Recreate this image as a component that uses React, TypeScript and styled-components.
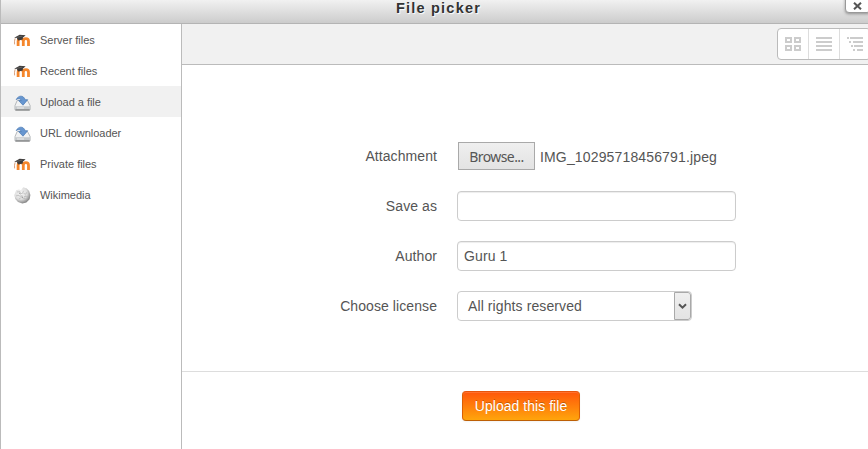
import React from "react";
import styled, { createGlobalStyle } from "styled-components";

const GlobalStyle = createGlobalStyle`
  * { box-sizing: border-box; }
  body { margin: 0; background: #fff; overflow: hidden; }
  body, button, input { font-family: "Liberation Sans", Arial, sans-serif; color: #555; }
`;

const Dialog = styled.div`
  position: relative;
  display: flex;
  flex-direction: column;
  width: 868px;
  height: 449px;
  overflow: hidden;
  border-left: 1px solid #bbb;
  background: #fff;
`;

const Header = styled.header`
  flex: none;
  height: 24px;
  padding-left: 8px;
  border-bottom: 1px solid #b4b4b4;
  background: linear-gradient(#f1f1f1, #cccccc);
  text-align: center;
`;

const Title = styled.h1`
  margin: 0;
  font-size: 14.5px;
  line-height: 16px;
  letter-spacing: 1.22px;
  color: #333;
  text-shadow: 1px 1px 1px #fff;
`;

const CloseButton = styled.button`
  position: absolute;
  top: -6px;
  right: -3px;
  width: 26px;
  height: 19px;
  padding: 4px 1px 0 0;
  display: flex;
  justify-content: center;
  align-items: center;
  border: 1px solid #999;
  border-radius: 4px;
  background: #fff;
  box-shadow: 0 1px 3px rgba(0, 0, 0, 0.35);
`;

const Body = styled.div`
  flex: 1;
  display: flex;
  min-height: 0;
`;

const Sidebar = styled.nav`
  flex: none;
  width: 181px;
  border-right: 1px solid #bbb;
`;

const Repository = styled.div<{ $active?: boolean }>`
  display: flex;
  align-items: center;
  gap: 9px;
  height: 31px;
  padding: 2px 0 0 13px;
  font-size: 11px;
  background: ${(p) => (p.$active ? "#f1f1f1" : "transparent")};
`;

const RepositoryName = styled.span`
  padding-bottom: 2px;
  letter-spacing: -0.02px;
`;

const Content = styled.main`
  flex: 1;
  min-width: 0;
  display: flex;
  flex-direction: column;
`;

const Toolbar = styled.div`
  flex: none;
  display: flex;
  height: 41px;
  padding: 4px 0 0 595px;
  border-bottom: 1px solid #bbb;
  background: #f1f1f1;
  overflow: hidden;
`;

const ViewGroup = styled.div`
  flex: none;
  display: flex;
  height: 32px;
  border: 1px solid #bbb;
  border-radius: 4px;
  background: #fff;
`;

const ViewButton = styled.button`
  display: flex;
  align-items: center;
  justify-content: center;
  width: 31px;
  padding: 0;
  border: 0;
  border-left: 1px solid #ddd;
  background: none;
  &:first-child { width: 30px; border-left: 0; }
`;

const Form = styled.form`
  flex: none;
  display: grid;
  grid-template-columns: 255px 1fr;
  grid-auto-rows: 30px;
  row-gap: 20px;
  column-gap: 20px;
  align-items: center;
  height: 307px;
  padding-top: 76px;
  border-bottom: 1px solid #ddd;
  font-size: 14px;
`;

const Label = styled.label`
  text-align: right;
  line-height: 20px;
  letter-spacing: 0.08px;
`;

const FileField = styled.div`
  display: flex;
  align-items: center;
  padding-left: 1px;
`;

const BrowseButton = styled.button`
  width: 77px;
  height: 28px;
  padding: 0;
  border: 1px solid #a9a9a9;
  background: linear-gradient(#efefef, #e3e3e3);
  font-family: "Noto Sans", "Open Sans", sans-serif;
  font-size: 14px;
  letter-spacing: -0.6px;
`;

const FileName = styled.span`
  margin: 2px 0 0 5px;
  letter-spacing: 0.15px;
`;

const TextInput = styled.input`
  width: 279px;
  height: 30px;
  padding: 0 6px;
  border: 1px solid #ccc;
  border-radius: 4px;
  box-shadow: inset 0 1px 1px rgba(0, 0, 0, 0.075);
  font-size: 14px;
  letter-spacing: 0.1px;
  outline: none;
`;

const Select = styled.div`
  display: flex;
  width: 235px;
  height: 30px;
  border: 1px solid #ccc;
  border-radius: 4px;
  line-height: 28px;
  overflow: hidden;
`;

const SelectValue = styled.span`
  flex: 1;
  padding-left: 10px;
  letter-spacing: 0.1px;
`;

const SelectArrow = styled.span`
  display: flex;
  align-items: center;
  justify-content: center;
  width: 17px;
  border: 1px solid #a9a9a9;
  border-radius: 0 3px 3px 0;
  background: linear-gradient(#efefef, #e3e3e3);
`;

const Footer = styled.footer`
  padding: 19px 0 0 280px;
`;

const UploadButton = styled.button`
  display: block;
  width: 118px;
  height: 30px;
  padding: 0;
  border: 1px solid;
  border-color: #e6550c #d95f04 #bd6005;
  border-radius: 4px;
  background: linear-gradient(#ff570a, #ffa50c);
  box-shadow: inset 0 1px 0 rgba(255, 255, 255, 0.15), 0 1px 2px rgba(0, 0, 0, 0.05);
  color: #fff;
  font-size: 14px;
  letter-spacing: 0.04px;
  text-shadow: 0 -1px 0 rgba(0, 0, 0, 0.25);
`;

const MoodleIcon = () => (
  <svg width="17" height="16" viewBox="0 0 17 16">
    <path d="M4.1 13V8.3a2.6 2.6 0 0 1 5.2 0V13M9.3 8.3a2.6 2.6 0 0 1 5.2 0V13" fill="none" stroke="#f5862b" strokeWidth="2.8" />
    <path d="M1.1 5.4Q.2 8 .6 11.4" fill="none" stroke="#d9a07c" />
    <path d="M.2 4.7 5.6 1.8l6 .5-2.8 2.4v1.9L4.2 7.6 2.8 5z" fill="#3e3c3b" />
    <path d="M1.6 4.6 8.4 3.1" stroke="#777" strokeWidth=".6" />
  </svg>
);

const UploadIcon = () => (
  <svg width="17" height="16" viewBox="0 0 17 16">
    <path d="M3.2 5.5h10.3l2.6 5v3.8q0 1-1 1H2q-1 0-1-1v-3.8z" fill="#f1f2f3" stroke="#a5a8ac" strokeWidth=".8" />
    <path d="M1.2 11.3h14.7v3.1q0 .8-.8.8H2q-.8 0-.8-.8z" fill="#c5c9cc" />
    <path d="M1.4 14.9h14.3" stroke="#777" />
    <path d="M3 13h7" stroke="#eee" />
    <path d="M2.2 4.6C4.2.3 9.4-.3 11.2 4.7h2.5L9 10.2 4.6 5.6h2.6C6.3 3.5 4.5 3.1 2.2 4.6z" fill="#6796d0" stroke="#4878b3" strokeWidth=".7" />
  </svg>
);

const GlobeIcon = () => (
  <svg width="17" height="17" viewBox="0 0 17 17">
    <defs>
      <radialGradient id="globe" cx=".4" cy=".35" r=".65">
        <stop offset="0" stopColor="#f6f6f6" />
        <stop offset=".6" stopColor="#dedede" />
        <stop offset="1" stopColor="#858585" />
      </radialGradient>
    </defs>
    <path d="M2.2 3.2 5 2.5l2 .8L9.2.3l3.5 1.1 2.4 2.6 1.3 3.9-.8 4.3-3.2 3.4-4 1-4.4-1.6L1.3 12 .3 8z" fill="url(#globe)" />
    <path d="m3 5 3-.3.5 2 2-.4 1-2.5M2 9l2-.8 2 1 2.2-.5.5 2.5 2.8.5M9.6 6.5l2.2.7 1-2M5 12l1.8-1.2M12 9l2 1" fill="none" stroke="#b5b5b5" strokeWidth=".7" />
    <path d="m5.3 6.2 1 .8M7.5 9.8l1 1M10.5 9.8l1-.6" stroke="#888" />
  </svg>
);

const GridIcon = () => (
  <svg width="16" height="14" shapeRendering="crispEdges" fill="none" stroke="#ccc" strokeWidth="2">
    <path d="M1 1h5v4H1zM10 1h5v4h-5zM1 9h5v4H1zM10 9h5v4h-5z" />
  </svg>
);

const ListIcon = () => (
  <svg width="16" height="14" shapeRendering="crispEdges" fill="#ccc">
    <path d="M0 0h16v2H0zM0 4h16v2H0zM0 8h16v2H0zM0 12h16v2H0z" />
  </svg>
);

const TreeIcon = () => (
  <svg width="16" height="14" shapeRendering="crispEdges" fill="#ccc">
    <path d="M0 0h2v2H0zM3 0h13v2H3zM2 4h2v2H2zM6 4h10v2H6zM4 8h2v2H4zM7 8h9v2H7zM6 12h2v2H6zM10 12h6v2h-6z" />
  </svg>
);

const repositories = [
  { name: "Server files", Icon: MoodleIcon },
  { name: "Recent files", Icon: MoodleIcon },
  { name: "Upload a file", Icon: UploadIcon, active: true },
  { name: "URL downloader", Icon: UploadIcon },
  { name: "Private files", Icon: MoodleIcon },
  { name: "Wikimedia", Icon: GlobeIcon },
];

export default function App() {
  return (
    <>
      <GlobalStyle />
      <Dialog>
        <Header>
          <Title>File picker</Title>
        </Header>
        <CloseButton aria-label="Close">
          <svg width="9" height="8" viewBox="0 0 9 8">
            <path d="m1 .7 7 6.6M8 .7 1 7.3" stroke="#555" strokeWidth="2" />
          </svg>
        </CloseButton>
        <Body>
          <Sidebar>
            {repositories.map(({ name, Icon, active }) => (
              <Repository key={name} $active={active}>
                <Icon />
                <RepositoryName>{name}</RepositoryName>
              </Repository>
            ))}
          </Sidebar>
          <Content>
            <Toolbar>
              <ViewGroup>
                <ViewButton aria-label="Icons"><GridIcon /></ViewButton>
                <ViewButton aria-label="List"><ListIcon /></ViewButton>
                <ViewButton aria-label="Tree"><TreeIcon /></ViewButton>
              </ViewGroup>
            </Toolbar>
            <Form>
              <Label>Attachment</Label>
              <FileField>
                <BrowseButton type="button">Browse...</BrowseButton>
                <FileName>IMG_10295718456791.jpeg</FileName>
              </FileField>
              <Label htmlFor="title">Save as</Label>
              <TextInput id="title" />
              <Label htmlFor="author">Author</Label>
              <TextInput id="author" defaultValue="Guru 1" />
              <Label>Choose license</Label>
              <Select>
                <SelectValue>All rights reserved</SelectValue>
                <SelectArrow>
                  <svg width="9" height="7" viewBox="0 0 9 7">
                    <path d="m1 1.2 3.5 3.5L8 1.2" fill="none" stroke="#555" strokeWidth="2" />
                  </svg>
                </SelectArrow>
              </Select>
            </Form>
            <Footer>
              <UploadButton>Upload this file</UploadButton>
            </Footer>
          </Content>
        </Body>
      </Dialog>
    </>
  );
}
